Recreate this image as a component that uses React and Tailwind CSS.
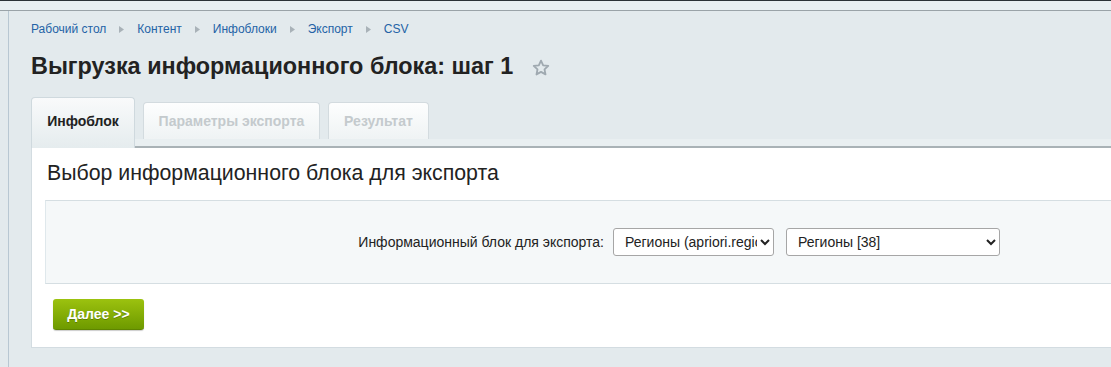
import React from 'react';

const crumbs = ['Рабочий стол', 'Контент', 'Инфоблоки', 'Экспорт', 'CSV'];

function Arrow() {
  return (
    <svg width="5" height="7" viewBox="0 0 5 7" className="mx-[13px]">
      <path d="M0 0 L5 3.5 L0 7 Z" fill="#a9b2b8" />
    </svg>
  );
}

export default function App() {
  return (
    <div className="min-h-[367px] bg-[#e3eaed] font-['Liberation_Sans',Arial,sans-serif]">
      <div className="h-px bg-[#2c3236]" />
      <div className="h-[9px] bg-[#e9eff1]" />
      <div className="h-px bg-[#9aa3a8]" />
      <div className="ml-2 border-l border-[#b8c7d2] pl-[22px] pb-[19px]">
        {/* breadcrumbs */}
        <div className="flex items-center pt-[6px] h-[30px] text-[12px] text-[#2463a6]">
          {crumbs.map((c, i) => (
            <React.Fragment key={c}>
              {i > 0 && <Arrow />}
              <span>{c}</span>
            </React.Fragment>
          ))}
        </div>

        <div className="flex items-center h-[52px] mb-[4px]">
          <h1 className="text-[23.4px] font-bold text-[#222]">Выгрузка информационного блока: шаг 1</h1>
          <svg width="20" height="20" viewBox="0 0 24 24" className="ml-[18px] mt-[1px]">
            <path
              d="M12 3.2l2.6 5.6 6.1.7-4.5 4.2 1.2 6-5.4-3-5.4 3 1.2-6-4.5-4.2 6.1-.7z"
              fill="none"
              stroke="#9fa9b0"
              strokeWidth="2.2"
              strokeLinejoin="round"
            />
          </svg>
        </div>

        {/* tabs */}
        <div className="flex items-end h-[51px] relative">
          <div className="absolute left-0 right-0 bottom-0 h-[9px] bg-[#e9eff1] border-b-2 border-[#a9b2b6]" />
          <div className="relative z-10 w-[104px] h-[51px] rounded-t-[4px] border border-b-0 border-[#cfd9de] bg-gradient-to-b from-[#f9fafb] to-[#e5ecee] text-[14px] font-bold text-[#222] flex items-center justify-center pb-[3px]">
            Инфоблок
          </div>
          <div className="relative z-10 ml-2 mb-[9px] w-[177px] h-[37px] rounded-t-[4px] border border-b-0 border-[#d3dbdf] bg-gradient-to-b from-[#fdfefe] to-[#eff3f4] text-[14px] font-bold text-[#c4cacd] flex items-center justify-center">
            Параметры экспорта
          </div>
          <div className="relative z-10 ml-2 mb-[9px] w-[101px] h-[37px] rounded-t-[4px] border border-b-0 border-[#d3dbdf] bg-gradient-to-b from-[#fdfefe] to-[#eff3f4] text-[14px] font-bold text-[#c4cacd] flex items-center justify-center">
            Результат
          </div>
        </div>

        {/* panel */}
        <div className="bg-white border-l border-b border-[#d3dce1] h-[200px] pl-[13px] pt-[12px]">
          <div className="text-[21.3px] text-[#222] pl-[2px] leading-[26px]">Выбор информационного блока для экспорта</div>
          <div className="mt-[14px] h-[84px] bg-[#f5f8f9] border-t border-b border-[#d5dee2] border-l border-l-[#dfe8ec] flex items-center">
            <div className="w-[558px] text-right text-[14px] text-[#222]">Информационный блок для экспорта:</div>
            <select
              defaultValue="a"
              className="ml-[9px] w-[161px] h-[28px] rounded-[3px] border border-[#a6a6a6] bg-white text-[14px] text-[#222] pl-[7px]"
            >
              <option value="a">Регионы (apriori.regions)</option>
            </select>
            <select
              defaultValue="b"
              className="ml-[12px] w-[214px] h-[28px] rounded-[3px] border border-[#a6a6a6] bg-white text-[14px] text-[#222] pl-[7px]"
            >
              <option value="b">Регионы [38]</option>
            </select>
          </div>
          <button className="mt-[15px] ml-[8px] w-[91px] h-[31px] rounded-[3px] bg-gradient-to-b from-[#9cc20f] to-[#6e9a00] border-b border-[#5f8500] text-white text-[14px] font-bold shadow-[0_1px_1px_rgba(0,0,0,0.2)] [text-shadow:0_1px_0_rgba(0,0,0,0.25)]">
            Далее &gt;&gt;
          </button>
        </div>
      </div>
    </div>
  );
}
